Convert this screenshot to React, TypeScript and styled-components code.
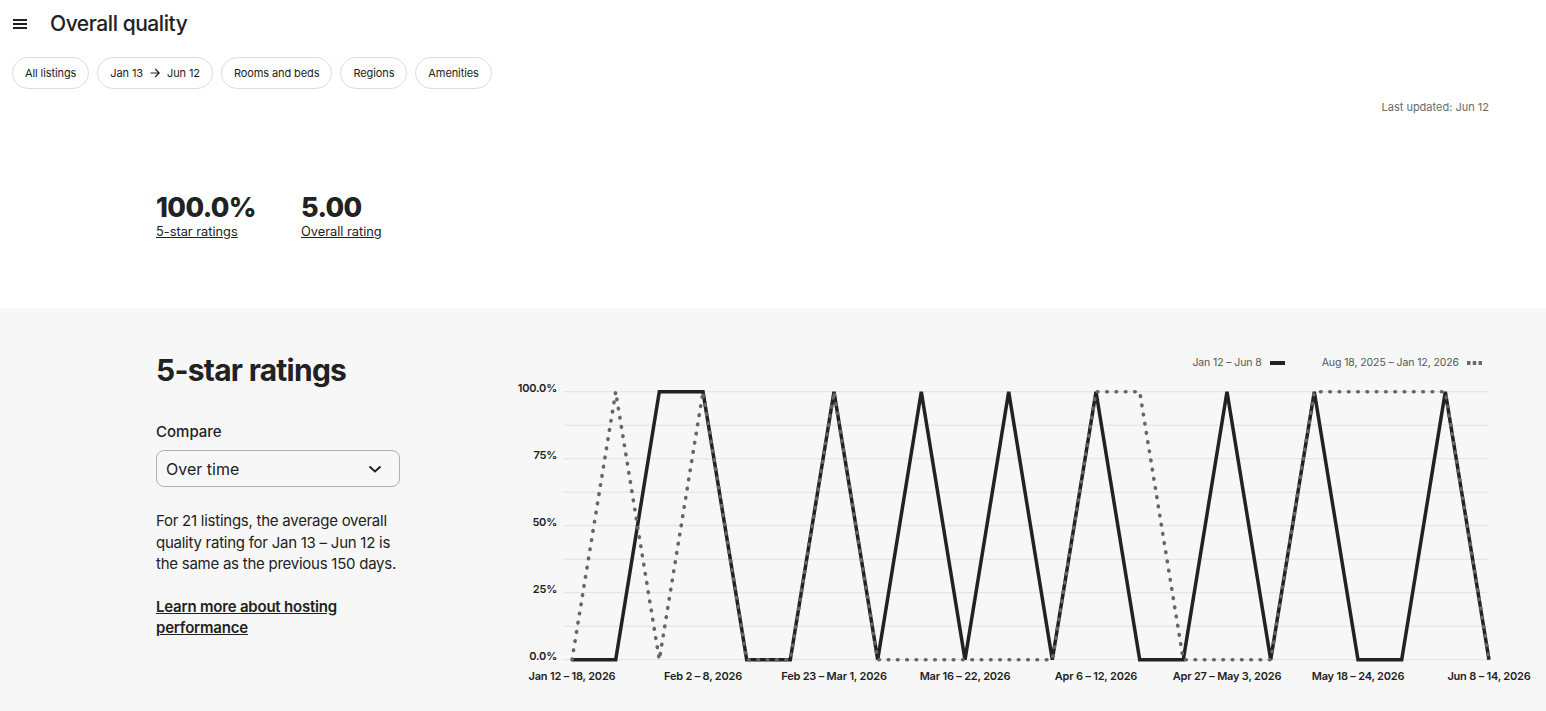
import React from 'react';
import styled, { createGlobalStyle } from 'styled-components';

const GlobalStyle = createGlobalStyle`
  body {
    margin: 0;
    background: #ffffff;
    font-family: Inter, "Noto Sans", "Liberation Sans", sans-serif;
    color: #222222;
  }
`;

const Page = styled.div`
  width: 1546px;
  min-height: 711px;
`;

const TopArea = styled.div`
  padding: 9px 57px 0 12px;
`;

const TitleRow = styled.div`
  display: flex;
  align-items: center;
  height: 30px;
`;

const MenuButton = styled.button`
  width: 16px;
  height: 28px;
  margin-left: 1px;
  padding: 0;
  border: none;
  background: none;
  display: flex;
  align-items: center;
  color: #222222;
`;

const Title = styled.h1`
  margin: 0 0 0 21px;
  font-size: 21px;
  font-weight: 500;
  line-height: 30px;
  letter-spacing: -0.45px;
`;

const ChipRow = styled.div`
  display: flex;
  gap: 8px;
  margin-top: 18px;
`;

const Chip = styled.button`
  height: 32px;
  padding: 0 12px;
  border: 1px solid #dddddd;
  border-radius: 16px;
  background: #ffffff;
  font-family: inherit;
  font-size: 11px;
  letter-spacing: -0.1px;
  color: #222222;
  display: flex;
  align-items: center;
  gap: 7px;
`;

const UpdatedNote = styled.div`
  margin-top: 10px;
  text-align: right;
  font-size: 11px;
  line-height: 16px;
  color: #6a6a6a;
`;

const StatsRow = styled.div`
  display: flex;
  gap: 45px;
  padding-left: 156px;
  margin-top: 78px;
  margin-bottom: 67px;
`;

const Stat = styled.div`
  display: flex;
  flex-direction: column;
`;

const StatValue = styled.div`
  font-size: 27px;
  font-weight: 800;
  line-height: 30px;
  letter-spacing: -0.6px;
`;

const StatLabel = styled.a`
  font-size: 12.8px;
  line-height: 18px;
  color: #222222;
  text-decoration: underline;
`;

const GreySection = styled.section`
  background: #f7f7f7;
  display: flex;
  padding: 44px 57px 21px 156px;
`;

const SideColumn = styled.div`
  width: 244px;
  flex-shrink: 0;
`;

const SectionHeading = styled.h2`
  margin: 0;
  font-size: 30px;
  font-weight: 700;
  line-height: 36px;
  letter-spacing: -0.75px;
`;

const FieldLabel = styled.div`
  margin-top: 34px;
  font-size: 15px;
  font-weight: 500;
  line-height: 20px;
`;

const SelectBox = styled.div`
  margin-top: 8px;
  height: 37px;
  box-sizing: border-box;
  border: 1px solid #b0b0b0;
  border-radius: 8px;
  display: flex;
  align-items: center;
  justify-content: space-between;
  padding: 0 17px 0 9px;
  font-size: 16px;
`;

const Summary = styled.p`
  margin: 23px 0 0;
  font-size: 15px;
  line-height: 21.5px;
  letter-spacing: -0.25px;
`;

const LearnLink = styled.a`
  display: block;
  margin-top: 21px;
  font-size: 15px;
  font-weight: 600;
  line-height: 21px;
  letter-spacing: -0.2px;
  color: #222222;
  text-decoration: underline;
`;

const ChartColumn = styled.div`
  flex: 1;
  margin-left: 100px;
  display: flex;
  flex-direction: column;
`;

const Legend = styled.div`
  display: flex;
  justify-content: flex-end;
  gap: 37px;
  margin-top: 3px;
  padding-right: 7px;
  font-size: 10.5px;
  letter-spacing: -0.1px;
  line-height: 16px;
  color: #555555;
`;

const LegendItem = styled.div`
  display: flex;
  align-items: center;
  gap: 8px;
`;

const ChartSvg = styled.svg`
  display: block;
  margin-top: 5px;
  overflow: visible;
`;

// weekly share of 5-star ratings, current period vs previous period
const current = [0, 0, 100, 100, 0, 0, 100, 0, 100, 0, 100, 0, 100, 0, 0, 100, 0, 100, 0, 0, 100, 0];
const previous = [0, 100, 0, 100, 0, 0, 100, 0, 0, 0, 0, 0, 100, 100, 0, 0, 0, 100, 100, 100, 100, 0];

const xTicks: { index: number; label: string }[] = [
  { index: 0, label: 'Jan 12 – 18, 2026' },
  { index: 3, label: 'Feb 2 – 8, 2026' },
  { index: 6, label: 'Feb 23 – Mar 1, 2026' },
  { index: 9, label: 'Mar 16 – 22, 2026' },
  { index: 12, label: 'Apr 6 – 12, 2026' },
  { index: 15, label: 'Apr 27 – May 3, 2026' },
  { index: 18, label: 'May 18 – 24, 2026' },
  { index: 21, label: 'Jun 8 – 14, 2026' },
];

const yTicks = [
  { value: 100, label: '100.0%' },
  { value: 75, label: '75%' },
  { value: 50, label: '50%' },
  { value: 25, label: '25%' },
  { value: 0, label: '0.0%' },
];

const CHART_W = 989;
const GRID_LEFT = 63;
const PLOT_LEFT = 72;
const TOP = 15.7;
const BOTTOM = 283.7;

const xAt = (i: number) => PLOT_LEFT + ((CHART_W - PLOT_LEFT) / 21) * i;
const yAt = (v: number) => BOTTOM - ((BOTTOM - TOP) * v) / 100;
const toPath = (data: number[]) =>
  data.map((v, i) => `${i === 0 ? 'M' : 'L'}${xAt(i).toFixed(1)},${yAt(v).toFixed(1)}`).join(' ');

const AxisText = styled.text`
  font-size: 11px;
  font-weight: 600;
  letter-spacing: -0.2px;
  fill: #222222;
`;

const RatingsChart: React.FC = () => {
  const gridLines = Array.from({ length: 9 }, (_, k) => TOP + ((BOTTOM - TOP) / 8) * k);
  return (
    <ChartSvg width={CHART_W} height={315} viewBox={`0 0 ${CHART_W} 315`}>
      {gridLines.map((y) => (
        <line key={y} x1={GRID_LEFT} x2={CHART_W} y1={y} y2={y} stroke="#e0e0e0" strokeWidth={1} />
      ))}
      {yTicks.map((t) => (
        <AxisText key={t.label} x={57} y={yAt(t.value) - 3} textAnchor="end" dominantBaseline="middle">
          {t.label}
        </AxisText>
      ))}
      {xTicks.map((t) => (
        <AxisText key={t.label} x={xAt(t.index)} y={301} textAnchor="middle" dominantBaseline="middle">
          {t.label}
        </AxisText>
      ))}
      <path d={toPath(current)} fill="none" stroke="#222222" strokeWidth={3.5} strokeLinejoin="miter" />
      <path
        d={toPath(previous)}
        fill="none"
        stroke="#666666"
        strokeWidth={3.6}
        strokeLinecap="round"
        strokeDasharray="0.6 8.7"
      />
    </ChartSvg>
  );
};

const App: React.FC = () => (
  <Page>
    <GlobalStyle />
    <TopArea>
      <TitleRow>
        <MenuButton aria-label="Menu">
          <svg width="14" height="12" viewBox="0 0 14 12">
            <rect x="0" y="1" width="14" height="2" fill="currentColor" />
            <rect x="0" y="5" width="14" height="2" fill="currentColor" />
            <rect x="0" y="9" width="14" height="2" fill="currentColor" />
          </svg>
        </MenuButton>
        <Title>Overall quality</Title>
      </TitleRow>
      <ChipRow>
        <Chip>All listings</Chip>
        <Chip>
          Jan 13
          <svg width="10" height="10" viewBox="0 0 10 10" fill="none" stroke="#222222" strokeWidth="1.2">
            <path d="M0.5 5 H9.2 M5.2 1 L9.2 5 L5.2 9" />
          </svg>
          Jun 12
        </Chip>
        <Chip>Rooms and beds</Chip>
        <Chip>Regions</Chip>
        <Chip>Amenities</Chip>
      </ChipRow>
      <UpdatedNote>Last updated: Jun 12</UpdatedNote>
    </TopArea>

    <StatsRow>
      <Stat>
        <StatValue>100.0%</StatValue>
        <StatLabel>5-star ratings</StatLabel>
      </Stat>
      <Stat>
        <StatValue>5.00</StatValue>
        <StatLabel>Overall rating</StatLabel>
      </Stat>
    </StatsRow>

    <GreySection>
      <SideColumn>
        <SectionHeading>5-star ratings</SectionHeading>
        <FieldLabel>Compare</FieldLabel>
        <SelectBox>
          <span>Over time</span>
          <svg width="14" height="8" viewBox="0 0 14 8" fill="none" stroke="#222222" strokeWidth="2">
            <path d="M1.5 1.5 L7 6.5 L12.5 1.5" />
          </svg>
        </SelectBox>
        <Summary>
          For 21 listings, the average overall quality rating for Jan 13 – Jun 12 is the same as the previous
          150 days.
        </Summary>
        <LearnLink>Learn more about hosting performance</LearnLink>
      </SideColumn>
      <ChartColumn>
        <Legend>
          <LegendItem>
            Jan 12 – Jun 8
            <svg width="15" height="4" viewBox="0 0 15 4">
              <rect width="15" height="4" fill="#222222" />
            </svg>
          </LegendItem>
          <LegendItem>
            Aug 18, 2025 – Jan 12, 2026
            <svg width="15" height="4" viewBox="0 0 15 4">
              <rect x="0" width="3.5" height="4" fill="#6a6a6a" />
              <rect x="5.75" width="3.5" height="4" fill="#6a6a6a" />
              <rect x="11.5" width="3.5" height="4" fill="#6a6a6a" />
            </svg>
          </LegendItem>
        </Legend>
        <RatingsChart />
      </ChartColumn>
    </GreySection>
  </Page>
);

export default App;
